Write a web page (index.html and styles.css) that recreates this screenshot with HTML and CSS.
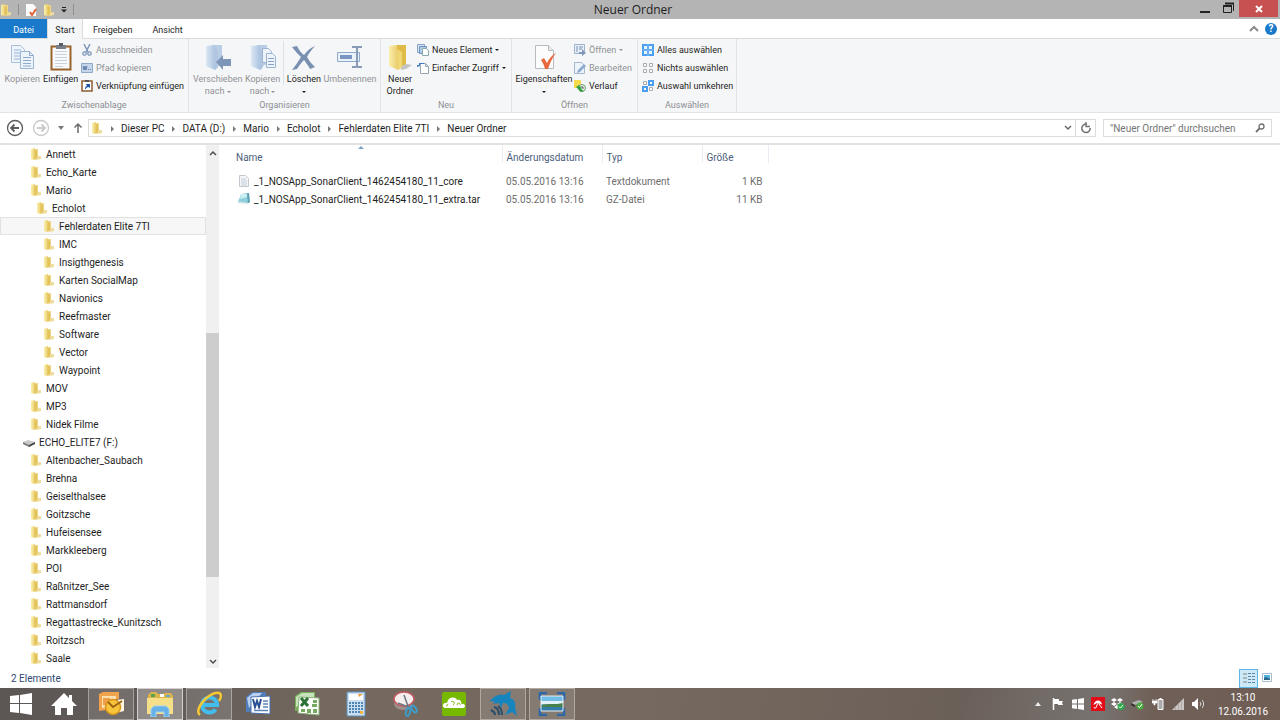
FILE: index.html
```
<!DOCTYPE html>
<html lang="de">
<head>
<meta charset="utf-8">
<meta name="viewport" content="width=device-width,initial-scale=1.0">
<title>Neuer Ordner</title>
<link rel="stylesheet" href="styles.css">
</head>
<body>
<!-- shared icons -->
<svg class="defs" width="0" height="0" aria-hidden="true">
	<defs>
		<linearGradient id="gold"><stop offset="0" stop-color="#fbefae"/><stop offset="1" stop-color="#e2bd4c"/></linearGradient>
		<linearGradient id="blue"><stop offset="0" stop-color="#dbe7f4"/><stop offset="1" stop-color="#9db9da"/></linearGradient>
	</defs>
	<symbol id="folder" viewBox="0 0 12 12">
		<path d="M5 1h3v7l3 1v2H4z" fill="#ecd685"/>
		<path d="M1 1l4-1v2l2 1v8l-3 1-3-1z" fill="url(#gold)"/>
		<path d="M5 2v9" stroke="#d8b650" stroke-width=".6"/>
		<path d="M7 9l4-1v3l-5 1z" fill="#eddc9c"/>
	</symbol>
	<symbol id="drive" viewBox="0 0 12 12">
		<path d="M0 6l5-2 7 2-6 3z" fill="#c9c9c9"/>
		<path d="M0 6l6 3v2L0 8z" fill="#777"/>
		<path d="M6 9l6-3v2l-6 3z" fill="#3f3f3f"/>
	</symbol>
	<symbol id="bigfolder" viewBox="0 0 28 28">
		<path d="M15 20l11 2-6 4-5 1z" fill="#c4c4c4"/>
		<path d="M10 2h10v19l-7 3z" fill="#dfbb48"/>
		<path d="M3 3l8-1v4l5 3v15l-4 3-9-4z" fill="url(#gold)"/>
		<path d="M12 7v20l4-3V9z" fill="#f0d675"/>
	</symbol>
	<symbol id="bluefolder" viewBox="0 0 28 28">
		<path d="M8 2h10v19l-6 3z" fill="#b9cde5"/>
		<path d="M2 3l9-1v4l3 3v15l-3 3-9-4z" fill="url(#blue)"/>
		<path d="M11 6v21l3-3V9z" fill="#afc5e0"/>
	</symbol>
	<symbol id="pages" viewBox="0 0 28 28">
		<path d="M3.500 2.500h9l4 4v13h-13z" fill="#edf3fa" stroke="#aabfd9"/>
		<path d="M6 7h7M6 10h8M6 13h8M6 16h8" stroke="#9bb5d6"/>
		<path d="M12.500 8.500h9l4 4v13h-13z" fill="#edf3fa" stroke="#9db5d3"/>
		<path d="M21.500 8.500v4h4M15 14.500h8M15 17.500h8M15 20.500h8M15 23h8" fill="none" stroke="#8da9cc"/>
	</symbol>
</svg>

<div class="window">
	<header class="titlebar">
		<div class="quick">
			<svg class="ico" viewBox="0 0 12 12"><use href="#folder"/></svg>
			<span class="quick-sep"></span>
			<button class="quick-btn" aria-label="Eigenschaften"><svg class="ico" viewBox="0 0 12 12"><path d="M1 0h7l3 3v9H1z" fill="#fbfbfb"/><path d="M5 8l2 3 4-6" fill="none" stroke="#e0643c" stroke-width="2"/></svg></button>
			<button class="quick-btn" aria-label="Neuer Ordner"><svg class="ico" viewBox="0 0 12 12"><use href="#folder"/></svg></button>
			<button class="quick-btn" aria-label="Schnellzugriff anpassen"><svg width="6" height="6" viewBox="0 0 6 6"><path d="M1 .5h4" stroke="#222"/><path d="M0 2.500h6L3 5.500z" fill="#222"/></svg></button>
			<span class="quick-sep"></span>
		</div>
		<h1 class="title">Neuer Ordner</h1>
		<div class="controls">
			<button class="ctl" aria-label="Minimieren"><svg width="12" height="12" viewBox="0 0 12 12"><path d="M1 10h10" stroke="#222" stroke-width="2"/></svg></button>
			<button class="ctl" aria-label="Wiederherstellen"><svg width="12" height="12" viewBox="0 0 12 12"><path d="M1.500 3.500h8v7h-8zM3 1.500h8.500V9" fill="none" stroke="#222"/><path d="M1 4h9M3 1.500h9" stroke="#222" stroke-width="2"/></svg></button>
			<button class="ctl close" aria-label="Schließen"><svg width="8" height="8" viewBox="0 0 8 8"><path d="M1 1l6 6M7 1L1 7" stroke="#fff" stroke-width="2"/></svg></button>
		</div>
	</header>

	<nav class="tabs">
		<button class="tab file">Datei</button>
		<button class="tab start active">Start</button>
		<button class="tab">Freigeben</button>
		<button class="tab">Ansicht</button>
		<div class="tabs-right">
			<button class="plain" aria-label="Menüband minimieren"><svg width="10" height="8" viewBox="0 0 10 8"><path d="M1 6l4-4 4 4" fill="none" stroke="#8a8a8a" stroke-width="2"/></svg></button>
			<button class="help" aria-label="Hilfe">?</button>
		</div>
	</nav>

	<section class="ribbon">
		<div class="group clip">
			<div class="group-body">
				<button class="big w38" disabled><svg class="big-ico" viewBox="0 0 28 28"><use href="#pages"/></svg><span>Kopieren</span></button>
				<button class="big w38"><svg class="big-ico" viewBox="0 0 28 28"><path d="M4.500 3.500h19v23h-19z" fill="#f8fafc" stroke="#99632b" stroke-width="2"/><path d="M8 8.500h12M8 11.500h12M8 14.500h12M8 17.500h12M8 20.500h12M8 23.500h8" stroke="#c8d2dd"/><path d="M9 2h10v4H9z" fill="#7a8089"/><path d="M12 0h4v3h-4z" fill="#555b63"/></svg><span>Einfügen</span></button>
				<div class="stack">
					<button class="item" disabled><svg class="ico" viewBox="0 0 12 12"><path d="M3 0l4 8M9 0L5 8" stroke="#7e98ba" stroke-width="1.500"/><circle cx="3.500" cy="9.500" r="1.700" fill="none" stroke="#7e98ba" stroke-width="1.300"/><circle cx="8.500" cy="9.500" r="1.700" fill="none" stroke="#7e98ba" stroke-width="1.300"/></svg>Ausschneiden</button>
					<button class="item" disabled><svg class="ico" viewBox="0 0 12 12"><path d="M.5 1.500h11v9H.5z" fill="#c6d6ea" stroke="#8fa9c9"/><path d="M2 4l1 4 1-4 1 4 1-4" fill="none" stroke="#5f7fa8"/><path d="M7 7.500h4" stroke="#5f7fa8" stroke-dasharray="1"/></svg>Pfad kopieren</button>
					<button class="item"><svg class="ico" viewBox="0 0 12 12"><path d="M1 1h10v10H1z" fill="#fff" stroke="#8a5d33" stroke-width="1.500"/><path d="M4 0h4v2H4z" fill="#555"/><path d="M4 9c0-2 1-3 2-3L5 4h4v4L7.500 7C6 7 5 8 5 9z" fill="#1c53a5"/></svg>Verknüpfung einfügen</button>
				</div>
			</div>
			<div class="group-name">Zwischenablage</div>
		</div>
		<div class="group organize">
			<div class="group-body">
				<button class="big w50" disabled><svg class="big-ico" viewBox="0 0 28 28"><use href="#bluefolder"/><path d="M12 19l7-7v4h8v7h-8v4z" fill="#7d95b7"/></svg><span>Verschieben<br>nach <i class="caret"></i></span></button>
				<button class="big w38" disabled><svg class="big-ico" viewBox="0 0 28 28"><use href="#bluefolder"/><path d="M13.500 5.500h6l3 3v11h-9z" fill="#eef3fa" stroke="#9cb3d1"/><path d="M17.500 10.500h6l3 3v11h-9z" fill="#eef3fa" stroke="#9cb3d1"/><path d="M19 15.500h6M19 18.500h6M19 21.500h6" stroke="#86a2c6"/></svg><span>Kopieren<br>nach <i class="caret"></i></span></button>
				<span class="group-sep"></span>
				<button class="big w38"><svg class="big-ico" viewBox="0 0 28 28"><path d="M2 4l5-1c2 4 4 7 7 9 3-4 6-7 11-9-3 3-6 7-8 11 2 4 5 7 8 10l-5 2c-2-4-4-6-6-9-3 3-5 6-7 9l-5 1c3-4 6-8 9-13C8 11 5 8 2 4z" fill="#7990b2"/></svg><span>Löschen<br><i class="caret"></i></span></button>
				<button class="big w54" disabled><svg class="big-ico" viewBox="0 0 28 28"><path d="M1.500 9.500h22v9h-22z" fill="#e9f1fa" stroke="#8fa9cc"/><path d="M4 12h12v4H4z" fill="#7896c1"/><path d="M16 4h4l1 1 1-1h4M21 5v18M16 24h4l1-1 1 1h4" fill="none" stroke="#879bb7" stroke-width="2"/></svg><span>Umbenennen</span></button>
			</div>
			<div class="group-name">Organisieren</div>
		</div>
		<div class="group new">
			<div class="group-body">
				<button class="big w34"><svg class="big-ico" viewBox="0 0 28 28"><use href="#bigfolder"/></svg><span>Neuer<br>Ordner</span></button>
				<div class="stack">
					<button class="item"><svg class="ico" viewBox="0 0 12 12"><path d="M.5 0.500h7v8h-7z" fill="#d8e5f3" stroke="#87a5c8"/><path d="M2.500 2.500h7v7h-7z" fill="#b2cce7" stroke="#6d91bb"/><path d="M5.500 4.500h4l2 2v5h-6z" fill="#fff" stroke="#8aa"/></svg>Neues Element <i class="caret"></i></button>
					<button class="item"><svg class="ico" viewBox="0 0 12 12"><path d="M3.500 1.500h5l3 3v7h-8z" fill="#fff" stroke="#99a5b3"/><path d="M8.500 1.500v3h3" fill="none" stroke="#99a5b3"/><path d="M0 5l3-1V2h4V1H2v2H0z" fill="#3d7ac7"/></svg>Einfacher Zugriff <i class="caret"></i></button>
				</div>
			</div>
			<div class="group-name">Neu</div>
		</div>
		<div class="group open">
			<div class="group-body">
				<button class="big w58"><svg class="big-ico" viewBox="0 0 28 28"><path d="M5.500 2.500h13l5 5v18h-18z" fill="#fcfcfc" stroke="#b7bcc2"/><path d="M18.500 2.500v5h5" fill="#e8e8e8" stroke="#b7bcc2"/><path d="M11 17l3-2 3 5c2-4 5-8 9-10-4 5-6 10-8 16h-3c-1-4-2-6-4-9z" fill="#e8693c"/></svg><span>Eigenschaften<br><i class="caret"></i></span></button>
				<div class="stack">
					<button class="item" disabled><svg class="ico" viewBox="0 0 12 12"><path d="M.5 .5h10v9H.5z" fill="#eaf0f8" stroke="#9fb3ce"/><path d="M2 3h2M2 5h2M2 7h2M5 3h4M5 5h3" stroke="#7391b9"/><path d="M5 8h3V5l4 4-4 3v-2H5z" fill="#8398b9"/></svg>Öffnen <i class="caret"></i></button>
					<button class="item" disabled><svg class="ico" viewBox="0 0 12 12"><path d="M.5 .5h7l3 3v8H.5z" fill="#edf3fa" stroke="#a6b8d0"/><path d="M3 11l1-3 6-6 2 2-6 6z" fill="#8eaad0"/></svg>Bearbeiten</button>
					<button class="item"><svg class="ico" viewBox="0 0 12 12"><path d="M0 0h7v8H0z" fill="#f5dc4e"/><circle cx="8" cy="8" r="3.500" fill="#e8f2e8" stroke="#719b71"/><path d="M8 6v2h2" fill="none" stroke="#555"/><path d="M2 7l3-2v1c2 0 2 2 3 4l2 1-3 1C5 11 5 9 5 9v1z" fill="#32a340"/></svg>Verlauf</button>
				</div>
			</div>
			<div class="group-name">Öffnen</div>
		</div>
		<div class="group select">
			<div class="group-body">
				<div class="stack">
					<button class="item"><svg class="ico" viewBox="0 0 12 12"><path d="M0 0h12v12H0z" fill="#4b9ff0"/><path d="M2 2h3v3H2zM7 2h3v3H7zM2 7h3v3H2zM7 7h3v3H7z" fill="#e9f4ff"/><path d="M6 0v12M0 6h12" stroke="#a6d0fa" stroke-width=".6"/></svg>Alles auswählen</button>
					<button class="item"><svg class="ico" viewBox="0 0 12 12"><path d="M1.500 1.500h3v3h-3zM7.500 1.500h3v3h-3zM1.500 7.500h3v3h-3zM7.500 7.500h3v3h-3z" fill="#fff" stroke="#aaa"/></svg>Nichts auswählen</button>
					<button class="item"><svg class="ico" viewBox="0 0 12 12"><path d="M6 0h6v6H6zM0 6h6v6H0z" fill="#4b9ff0"/><path d="M8 2h2v2H8zM2 8h2v2H2z" fill="#fff"/><path d="M1.500 1.500h3v3h-3zM7.500 7.500h3v3h-3z" fill="#fff" stroke="#aaa"/></svg>Auswahl umkehren</button>
				</div>
			</div>
			<div class="group-name">Auswählen</div>
		</div>
	</section>

	<div class="addressbar">
		<div class="history">
			<button class="plain" aria-label="Zurück"><svg width="18" height="18" viewBox="0 0 18 18"><circle cx="9" cy="9" r="7.500" fill="none" stroke="#5c5c5c" stroke-width="1.300"/><path d="M13 9H5M8.500 5.500L5 9l3.500 3.500" fill="none" stroke="#5c5c5c" stroke-width="1.800"/></svg></button>
			<button class="plain" aria-label="Vorwärts"><svg width="18" height="18" viewBox="0 0 18 18"><circle cx="9" cy="9" r="7.500" fill="none" stroke="#c9c9c9" stroke-width="1.300"/><path d="M5 9h8M9.500 5.500L13 9l-3.500 3.500" fill="none" stroke="#c9c9c9" stroke-width="1.800"/></svg></button>
			<button class="plain" aria-label="Letzte Orte"><svg width="6" height="4" viewBox="0 0 6 4"><path d="M0 0h6L3 4z" fill="#777"/></svg></button>
			<button class="plain" aria-label="Nach oben"><svg width="12" height="12" viewBox="0 0 12 12"><path d="M6 11V2M2.500 5.500L6 2l3.500 3.500" fill="none" stroke="#6b6b6b" stroke-width="1.500"/></svg></button>
		</div>
		<div class="path">
			<svg class="ico" viewBox="0 0 12 12"><use href="#folder"/></svg>
			<a class="crumb" href="#">Dieser PC</a>
			<a class="crumb" href="#">DATA (D:)</a>
			<a class="crumb" href="#">Mario</a>
			<a class="crumb" href="#">Echolot</a>
			<a class="crumb" href="#">Fehlerdaten Elite 7TI</a>
			<a class="crumb" href="#">Neuer Ordner</a>
			<button class="plain drop" aria-label="Vorherige Orte"><svg width="8" height="6" viewBox="0 0 8 6"><path d="M1 1l3 3 3-3" fill="none" stroke="#666" stroke-width="1.500"/></svg></button>
			<button class="plain refresh" aria-label="Aktualisieren"><svg width="12" height="12" viewBox="0 0 12 12"><path d="M7 2.200A4.200 4.200 0 1 0 10.200 6" fill="none" stroke="#707070" stroke-width="1.500"/><path d="M6 0v4.500h4" fill="none" stroke="#707070" stroke-width="1.300"/></svg></button>
		</div>
		<div class="search">
			<input class="search-input" type="search" aria-label="Suchen" placeholder="&quot;Neuer Ordner&quot; durchsuchen">
			<svg width="10" height="10" viewBox="0 0 10 10"><circle cx="6.500" cy="3.500" r="2.500" fill="none" stroke="#707070" stroke-width="1.300"/><path d="M4.500 5.500L1 9" stroke="#707070" stroke-width="1.800"/></svg>
		</div>
	</div>

	<main class="main">
		<nav class="tree">
			<a class="node l1" href="#"><svg class="ico"><use href="#folder"/></svg>Annett</a>
			<a class="node l1" href="#"><svg class="ico"><use href="#folder"/></svg>Echo_Karte</a>
			<a class="node l1" href="#"><svg class="ico"><use href="#folder"/></svg>Mario</a>
			<a class="node l2" href="#"><svg class="ico"><use href="#folder"/></svg>Echolot</a>
			<a class="node l3 current" href="#"><svg class="ico"><use href="#folder"/></svg>Fehlerdaten Elite 7TI</a>
			<a class="node l3" href="#"><svg class="ico"><use href="#folder"/></svg>IMC</a>
			<a class="node l3" href="#"><svg class="ico"><use href="#folder"/></svg>Insigthgenesis</a>
			<a class="node l3" href="#"><svg class="ico"><use href="#folder"/></svg>Karten SocialMap</a>
			<a class="node l3" href="#"><svg class="ico"><use href="#folder"/></svg>Navionics</a>
			<a class="node l3" href="#"><svg class="ico"><use href="#folder"/></svg>Reefmaster</a>
			<a class="node l3" href="#"><svg class="ico"><use href="#folder"/></svg>Software</a>
			<a class="node l3" href="#"><svg class="ico"><use href="#folder"/></svg>Vector</a>
			<a class="node l3" href="#"><svg class="ico"><use href="#folder"/></svg>Waypoint</a>
			<a class="node l1" href="#"><svg class="ico"><use href="#folder"/></svg>MOV</a>
			<a class="node l1" href="#"><svg class="ico"><use href="#folder"/></svg>MP3</a>
			<a class="node l1" href="#"><svg class="ico"><use href="#folder"/></svg>Nidek Filme</a>
			<a class="node l0" href="#"><svg class="ico"><use href="#drive"/></svg>ECHO_ELITE7 (F:)</a>
			<a class="node l1" href="#"><svg class="ico"><use href="#folder"/></svg>Altenbacher_Saubach</a>
			<a class="node l1" href="#"><svg class="ico"><use href="#folder"/></svg>Brehna</a>
			<a class="node l1" href="#"><svg class="ico"><use href="#folder"/></svg>Geiselthalsee</a>
			<a class="node l1" href="#"><svg class="ico"><use href="#folder"/></svg>Goitzsche</a>
			<a class="node l1" href="#"><svg class="ico"><use href="#folder"/></svg>Hufeisensee</a>
			<a class="node l1" href="#"><svg class="ico"><use href="#folder"/></svg>Markkleeberg</a>
			<a class="node l1" href="#"><svg class="ico"><use href="#folder"/></svg>POI</a>
			<a class="node l1" href="#"><svg class="ico"><use href="#folder"/></svg>Raßnitzer_See</a>
			<a class="node l1" href="#"><svg class="ico"><use href="#folder"/></svg>Rattmansdorf</a>
			<a class="node l1" href="#"><svg class="ico"><use href="#folder"/></svg>Regattastrecke_Kunitzsch</a>
			<a class="node l1" href="#"><svg class="ico"><use href="#folder"/></svg>Roitzsch</a>
			<a class="node l1" href="#"><svg class="ico"><use href="#folder"/></svg>Saale</a>
		</nav>
		<div class="scrollbar">
			<button class="scroll-btn" aria-label="Nach oben scrollen"><svg width="8" height="6" viewBox="0 0 8 6"><path d="M1 5l3-3 3 3" fill="none" stroke="#505050" stroke-width="1.500"/></svg></button>
			<div class="scroll-before"></div>
			<div class="scroll-thumb"></div>
			<div class="scroll-after"></div>
			<button class="scroll-btn" aria-label="Nach unten scrollen"><svg width="8" height="6" viewBox="0 0 8 6"><path d="M1 1l3 3 3-3" fill="none" stroke="#505050" stroke-width="1.500"/></svg></button>
		</div>
		<div class="files">
			<table class="list">
				<thead>
					<tr>
						<th class="c-name">Name<svg class="sort" width="6" height="4" viewBox="0 0 6 4"><path d="M0 4l3-3 3 3z" fill="#7ba3c8"/></svg></th>
						<th class="c-date">Änderungsdatum</th>
						<th class="c-type">Typ</th>
						<th class="c-size">Größe</th>
					</tr>
				</thead>
				<tbody>
					<tr>
						<td class="c-name"><span class="fname"><svg class="ico" viewBox="0 0 12 12"><path d="M1.500 .5h6l3 3v8h-9z" fill="#f4f6f8" stroke="#c3c8ce"/><path d="M3 4h5M3 6h6M3 8h6M3 10h6" stroke="#aebccb" stroke-width=".7"/></svg>_1_NOSApp_SonarClient_1462454180_11_core</span></td>
						<td>05.05.2016 13:16</td>
						<td>Textdokument</td>
						<td class="num">1 KB</td>
					</tr>
					<tr>
						<td class="c-name"><span class="fname"><svg class="ico" viewBox="0 0 12 12"><path d="M4 1l7-1 1 9-3 2z" fill="#5c9fb0"/><path d="M3 1h6l1 9-9 1-1-2z" fill="#8fd0dc"/><path d="M3 1h6v3L2 6z" fill="#cbeef2"/><path d="M0 9l10 1-1 2-8-1z" fill="#eef4f4"/></svg>_1_NOSApp_SonarClient_1462454180_11_extra.tar</span></td>
						<td>05.05.2016 13:16</td>
						<td>GZ-Datei</td>
						<td class="num">11 KB</td>
					</tr>
				</tbody>
			</table>
		</div>
	</main>

	<footer class="status">
		<span>2 Elemente</span>
		<div class="views">
			<button class="view on" aria-label="Details"><svg width="14" height="12" viewBox="0 0 14 12"><path d="M1 1h4v2H1zM1 5h4v2H1zM1 9h4v2H1z" fill="#a6b4bc"/><path d="M6 1.500h3M10 1.500h3M6 4.500h3M10 4.500h3M6 7.500h3M10 7.500h3M6 10.500h3M10 10.500h3" stroke="#5e87a3"/></svg></button>
			<button class="view" aria-label="Große Symbole"><svg width="10" height="10" viewBox="0 0 10 10"><path d="M.5 .5h9v8h-9z" fill="#fff" stroke="#a7bccb"/><path d="M2 2h6v5H2z" fill="#53b0de"/><path d="M2 5l2-1 4 2v1H2z" fill="#2c6688"/></svg></button>
		</div>
	</footer>
</div>

<footer class="taskbar">
	<button class="task win" aria-label="Start"><svg width="22" height="22" viewBox="0 0 22 22"><path d="M0 3l9-1v8H0zM10 2l12-2v10H10zM0 11h9v9l-9-1zM10 11h12v11l-12-2z" fill="#fff"/></svg></button>
	<button class="task home" aria-label="Startseite"><svg width="26" height="22" viewBox="0 0 26 22"><path d="M13 0l5 5V2h3v6l5 5h-4v9h-6v-7h-6v7H4v-9H0z" fill="#fff"/></svg></button>
	<div class="apps">
		<button class="task run" aria-label="Outlook"><svg width="26" height="26" viewBox="0 0 26 26"><path d="M1 3l4-2h16v7H8v11l-7 1z" fill="#f1a34b"/><path d="M4 5h14v12H4z" fill="#fbe0b0"/><path d="M5 7h7v7H5z" fill="#f0a04a"/><path d="M10 10l16-2v12l-12 3z" fill="#fff5dc"/><circle cx="15" cy="16" r="7.500" fill="#f8c43c" stroke="#d8941c" stroke-width="1.500"/><path d="M10 11l5 5 9-6" fill="none" stroke="#9b6213" stroke-width="1.800"/></svg></button>
		<button class="task run front" aria-label="Explorer"><svg width="28" height="26" viewBox="0 0 28 26"><path d="M2 4l3-3h5l2 2h5l2-1h6l2 3v18H2z" fill="#dcb54c"/><path d="M5 3h4v3H5z" fill="#55a54e"/><path d="M14 3h4v3h-4z" fill="#fff"/><path d="M20 4h4v2h-4z" fill="#6ba3d1"/><path d="M1 7h26v16H1z" fill="#f5df89"/><path d="M5 26V18l3-3h12l3 3v8h-5v-5h-8v5z" fill="#69b2e6" stroke="#9dd1f3"/></svg></button>
		<button class="task run" aria-label="Internet Explorer"><svg width="26" height="26" viewBox="0 0 26 26"><path d="M19.500 18.500a7.500 7.500 0 1 1 1.500-4.500H8" fill="none" stroke="#43bdeb" stroke-width="4"/><path d="M4 24C-3 19 13 0 23 2c3 1 2 5 0 8" fill="none" stroke="#f5c832" stroke-width="2.500"/></svg></button>
		<button class="task" aria-label="Word"><svg width="26" height="26" viewBox="0 0 26 26"><path d="M1 6l6-5h14v19L1 21z" fill="#517dbb"/><path d="M2 7l6-5h9L4 17z" fill="#b8d0ee"/><path d="M6 6l19-1v18L6 22z" fill="#fff" stroke="#4870ad"/><path d="M8 8l2 8 2-6 2 6 2-8" fill="none" stroke="#294f95" stroke-width="2"/><path d="M18 10h5M18 13h5M18 16h5M9 19.500h14" stroke="#5f83b8" stroke-width="1.500"/></svg></button>
		<button class="task" aria-label="Excel"><svg width="26" height="26" viewBox="0 0 26 26"><path d="M1 5l6-4h14v17L1 20z" fill="#78b15c"/><path d="M2 6l6-4h12v6L2 16z" fill="#c8e3bc"/><path d="M5 6l20 1v17L4 22z" fill="#fff" stroke="#88b276"/><path d="M7 18h4v3H7zM13 18h4v4h-4zM19 18h4v4h-4zM19 9h4v3h-4zM18 13h5v3h-5z" fill="#76aa60"/><path d="M7 7l7 8M14 7l-7 8" stroke="#2c7135" stroke-width="3"/></svg></button>
		<button class="task" aria-label="Rechner"><svg width="20" height="26" viewBox="0 0 20 26"><path d="M1 1h18v24H1z" fill="#cae0f0" stroke="#5c8eb9"/><path d="M3 3h14v6H3z" fill="#fff"/><path d="M12 3h5l-4 3z" fill="#eba13d"/><path d="M3 12h14M3 15h14M3 18h14M3 21h14" stroke="#5085b4" stroke-width="2" stroke-dasharray="2 1"/><path d="M14 20h3v3h-3z" fill="#f5b340"/></svg></button>
		<button class="task" aria-label="Snipping Tool"><svg width="26" height="26" viewBox="0 0 26 26"><ellipse cx="11" cy="13" rx="9" ry="6" fill="#9d8d8b"/><ellipse cx="12" cy="8" rx="10" ry="7" fill="#f7eeee" stroke="#c55a62" stroke-width="1.500"/><path d="M12 4l5 14M6 12l13 5" stroke="#6c7884" stroke-width="1.500"/><ellipse cx="16" cy="21" rx="2" ry="4" fill="none" stroke="#3e9cc9" stroke-width="2" transform="rotate(15 16 21)"/><ellipse cx="22" cy="18" rx="2" ry="4" fill="none" stroke="#3e9cc9" stroke-width="2" transform="rotate(-35 22 18)"/></svg></button>
		<button class="task" aria-label="Cloud"><svg width="26" height="26" viewBox="0 0 26 26"><rect x="1" y="1" width="24" height="24" rx="2" fill="#76b900"/><path d="M4 17c-4-1-2-6 2-5 1-6 8-7 10-3 4-1 5 3 4 4 5-1 5 4 2 4z" fill="#fff"/><path d="M5 15c2 0 2-2 1-2M10 11c2-2 5 1 2 3M16 14c0-3 4-2 3 0" fill="none" stroke="#76b900"/></svg></button>
		<button class="task run" aria-label="Reefmaster"><svg width="28" height="26" viewBox="0 0 28 26"><path d="M1 10C4 6 9 3 15 4l7-4-1 7c4 1 6 4 5 9l2 9-5-4-7 3 4-7c0-3-3-5-6-5l-2 5-2-5-6 1 2-2z" fill="#1685bd"/><path d="M2 19c2 1 4 2 4 5M5 16c4 1 5 4 5 8M9 15c3 2 4 5 4 9" fill="none" stroke="#284d6c" stroke-width="2"/></svg></button>
		<button class="task run" aria-label="Bildanzeige"><svg width="28" height="24" viewBox="0 0 28 24"><path d="M2 8V1h7M19 1h7v7M26 16v7h-7M9 23H2v-7" fill="none" stroke="#2a68aa" stroke-width="2.500"/><path d="M3 4h22v15H3z" fill="#72bce8"/><path d="M3 9h22v3H3z" fill="#e2f1f7"/><path d="M3 13c7-2 15 0 22-2v4H3z" fill="#47804b"/><path d="M3 15h22v4H3z" fill="#327da7"/><path d="M3 4h22v15H3z" fill="none" stroke="#e5edf3"/></svg></button>
	</div>
	<div class="tray">
		<button class="tray-btn" aria-label="Ausgeblendete Symbole"><svg width="6" height="4" viewBox="0 0 6 4"><path d="M0 4l3-4 3 4z" fill="#eee"/></svg></button>
		<button class="tray-btn" aria-label="Wartungscenter"><svg width="12" height="12" viewBox="0 0 12 12"><path d="M1.500 0v12" stroke="#fff" stroke-width="1.500"/><path d="M2 1h5v2h4l-1 2 1 2H6V6H2z" fill="#fff"/></svg></button>
		<button class="tray-btn" aria-label="Windows"><svg width="12" height="12" viewBox="0 0 22 22"><path d="M0 3l9-1v8H0zM11 2l11-2v10H11zM0 12h9v8l-9-1zM11 12h11v10l-11-2z" fill="#fff"/></svg></button>
		<button class="tray-btn" aria-label="Avira"><svg width="14" height="14" viewBox="0 0 14 14"><path d="M0 0h14v14H0z" fill="#e30d18"/><path d="M2.500 8C3 3 10 1 11 7.500L6 6z" fill="#fff"/><path d="M7 6l-2 4.500c0 1-2 1-2-.5M8 7l3 4" fill="none" stroke="#fff"/></svg></button>
		<button class="tray-btn" aria-label="Dropbox"><svg width="14" height="12" viewBox="0 0 14 12"><path d="M3 0l3 2-3 2-3-2zM9 0l3 2-3 2-3-2zM3 4l3 2-3 2-3-2zM9 4l3 2-3 2-3-2zM6 7l3 2-3 2-3-2z" fill="#fff"/><circle cx="10" cy="8.500" r="3.500" fill="#2da84a"/><path d="M8 8.500l1.500 1.500L12 7" fill="none" stroke="#fff"/></svg></button>
		<button class="tray-btn" aria-label="Hardware sicher entfernen"><svg width="14" height="12" viewBox="0 0 14 12"><path d="M0 5l8-3 4 2-8 3z" fill="#b1b1b1"/><path d="M0 5l4 2v2L0 7z" fill="#333"/><circle cx="9" cy="8" r="3.500" fill="#4bac3f"/><path d="M7 8l1.500 1.500L11 6" fill="none" stroke="#fff"/></svg></button>
		<button class="tray-btn" aria-label="Akku"><svg width="12" height="12" viewBox="0 0 12 12"><path d="M6 1.500h5v10H6z" fill="#aaa" stroke="#fff"/><path d="M7.500 0h2v1h-2z" fill="#fff"/><path d="M1 1v2M4 1v2M0 3h5v2H3v2H2V5H0z" fill="#fff" stroke="#fff" stroke-width=".7"/></svg></button>
		<button class="tray-btn" aria-label="Netzwerk"><svg width="12" height="12" viewBox="0 0 12 12"><path d="M0 12L12 0v12z" fill="#cbc6c3"/><path d="M3.500 8v4M6.500 5v7M9.500 2v10" stroke="#aaa39e" stroke-width=".8"/></svg></button>
		<button class="tray-btn" aria-label="Lautstärke"><svg width="13" height="12" viewBox="0 0 13 12"><path d="M0 4h2l4-4v12L2 8H0z" fill="#fff"/><path d="M8 4c1 1 1 3 0 4M10 2c2 2 2 6 0 8" fill="none" stroke="#ddd"/></svg></button>
		<div class="clock"><time>13:10</time><time>12.06.2016</time></div>
	</div>
</footer>
</body>
</html>
```
FILE: styles.css
```
*,*:before,*:after{
	padding: 0;
	margin: 0;
	box-sizing: border-box;
}
body{
	display: flex;
	flex-direction: column;
	height: 100vh;
	overflow: hidden;
	font-family: Roboto, "Open Sans", sans-serif;
	font-size: 10px;
	color: #1e1e1e;
	background-color: #fff;
}
button,input{
	font: inherit;
	color: inherit;
	border: 0;
	background: none;
}
a{
	color: inherit;
	text-decoration: none;
}
svg{
	flex: none;
}
.defs{
	position: absolute;
}
.ico{
	width: 12px;
	height: 12px;
}
.plain{
	display: flex;
	align-items: center;
	justify-content: center;
}
.caret{
	display: inline-block;
	border: 2px solid transparent;
	border-top-color: currentColor;
	border-bottom: 0;
	vertical-align: middle;
}
.window{
	flex: 1;
	display: flex;
	flex-direction: column;
	min-height: 0;
}

/* title bar */
.titlebar{
	display: flex;
	height: 19px;
	background-color: #b4b4b4;
}
.quick{
	display: flex;
	align-items: center;
	gap: 6px;
	width: 76px;
}
.quick-sep{
	width: 1px;
	height: 11px;
	background-color: #8f8f8f;
}
.quick-btn{
	display: flex;
	align-items: center;
}
.title{
	flex: 1;
	text-align: center;
	font-family: "Open Sans", sans-serif;
	font-size: 12px;
	font-weight: normal;
	line-height: 20px;
}
.controls{
	display: flex;
	width: 90px;
	padding-left: 4px;
}
.ctl{
	display: flex;
	align-items: center;
	justify-content: center;
	width: 23px;
	height: 16px;
}
.ctl.close{
	width: 39px;
	height: 17px;
	margin-left: auto;
	margin-right: 2px;
	background-color: #c75050;
}

/* tabs */
.tabs{
	display: flex;
	height: 20px;
	border-bottom: 1px solid #dadbdc;
}
.tab{
	height: 20px;
	padding: 2px 10px 0;
	font-size: 9px;
}
.tab.file{
	width: 47px;
	height: 19px;
	color: #fff;
	background-color: #1979ca;
}
.tab.start{
	width: 36px;
	padding: 2px 0 0;
	border: 1px solid #dadbdc;
	border-width: 0 1px;
	background-color: #f5f6f7;
}
.tabs-right{
	display: flex;
	align-items: center;
	gap: 6px;
	margin-left: auto;
	padding-right: 3px;
}
.help{
	width: 12px;
	height: 12px;
	border-radius: 50%;
	font-weight: bold;
	line-height: 12px;
	color: #fff;
	background-color: #1979ca;
}

/* ribbon */
.ribbon{
	display: flex;
	height: 74px;
	font-size: 9px;
	border-bottom: 1px solid #e2e3e4;
	background-color: #f5f6f7;
}
.group{
	display: flex;
	flex-direction: column;
	padding: 2px 4px 0;
	border-right: 1px solid #e2e3e4;
}
.clip{
	width: 189px;
}
.organize{
	width: 192px;
}
.new{
	width: 131px;
}
.open{
	width: 126px;
}
.select{
	width: 99px;
}
.group-body{
	display: flex;
	flex: 1;
	gap: 2px;
}
.group-name{
	line-height: 14px;
	text-align: center;
	color: #8c8f94;
}
.group-sep{
	width: 1px;
	height: 44px;
	background-color: #e0e1e3;
}
.big{
	display: flex;
	flex-direction: column;
	align-items: center;
	gap: 2px;
	height: 56px;
	padding-top: 2px;
	line-height: 12px;
	white-space: nowrap;
}
.big-ico{
	width: 28px;
	height: 28px;
}
.w34{
	width: 30px;
}
.w38{
	width: 37px;
}
.w50{
	width: 50px;
}
.w54{
	width: 52px;
}
.w58{
	width: 56px;
}
.big:disabled,.item:disabled{
	color: #8f9296;
}
.stack{
	display: flex;
	flex-direction: column;
}
.item{
	display: flex;
	align-items: center;
	gap: 3px;
	height: 18px;
	white-space: nowrap;
}

/* address bar */
.addressbar{
	display: flex;
	align-items: center;
	gap: 7px;
	height: 32px;
	padding: 0 8px 0 6px;
	border-bottom: 2px solid #e2e2e2;
}
.history{
	display: flex;
	align-items: center;
	gap: 8px;
	width: 75px;
}
.path{
	display: flex;
	flex: 1;
	align-items: center;
	height: 18px;
	padding-left: 2px;
	border: 1px solid #dcdcdc;
}
.crumb:before{
	content: "";
	display: inline-block;
	margin: 0 7px 0 8px;
	border: 3px solid transparent;
	border-left-color: #777;
	border-right: 0;
}
.drop{
	width: 14px;
	margin-left: auto;
}
.refresh{
	width: 20px;
	height: 16px;
	border-left: 1px solid #dcdcdc;
}
.search{
	display: flex;
	align-items: center;
	width: 169px;
	height: 18px;
	padding: 0 6px;
	border: 1px solid #dcdcdc;
}
.search-input{
	flex: 1;
	min-width: 0;
	outline: 0;
	appearance: none;
}
.search-input::placeholder{
	color: #757575;
}

/* folder tree */
.main{
	flex: 1;
	display: flex;
	min-height: 0;
}
.tree{
	width: 206px;
	overflow: hidden;
}
.node{
	display: flex;
	align-items: center;
	gap: 4px;
	height: 18px;
	border: 1px solid transparent;
}
.l0{
	padding-left: 22px;
}
.l1{
	padding-left: 29px;
}
.l2{
	padding-left: 35px;
}
.l3{
	padding-left: 42px;
}
.current{
	border-color: #e2e2e2;
	background-color: #f7f7f7;
}
.scrollbar{
	display: flex;
	flex-direction: column;
	width: 13px;
	background-color: #f0f0f0;
}
.scroll-btn{
	height: 14px;
}
.scroll-before{
	flex: 174;
}
.scroll-thumb{
	flex: 243;
	background-color: #cdcdcd;
}
.scroll-after{
	flex: 77;
}

/* file list */
.files{
	flex: 1;
	padding-left: 12px;
}
.list{
	width: 538px;
	table-layout: fixed;
	border-collapse: collapse;
}
.list th{
	position: relative;
	height: 18px;
	padding: 6px 4px 0;
	text-align: left;
	font-weight: normal;
	color: #4c607a;
	border-right: 1px solid #e9eef4;
}
.list .c-name{
	padding-left: 5px;
}
th.c-name{
	width: 271px;
}
th.c-date,th.c-type{
	width: 100px;
}
.sort{
	position: absolute;
	top: 0;
	left: 47%;
}
.list tbody:before{
	content: "";
	display: block;
	height: 9px;
}
.list td{
	height: 18px;
	padding: 0 4px;
	color: #6d6d6d;
}
.list .num{
	padding-right: 6px;
	text-align: right;
}
.fname{
	display: flex;
	align-items: center;
	gap: 4px;
	padding-left: 2px;
	color: #1e1e1e;
}

/* status bar */
.status{
	display: flex;
	align-items: center;
	justify-content: space-between;
	height: 20px;
	padding: 0 4px 0 11px;
	color: #2f4a70;
}
.views{
	display: flex;
}
.view{
	display: flex;
	align-items: center;
	justify-content: center;
	width: 18px;
	height: 19px;
}
.view.on{
	width: 19px;
	border: 1px solid #5fb7e5;
	background-color: #cde9f7;
}

/* taskbar */
.taskbar{
	display: flex;
	height: 32px;
	color: #fff;
	background: linear-gradient(100deg, #5c5655 0, #625b58 14%, #75695f 26%, #76695f 50%, #6b6059 75%, #777370 86%, #6f5f56 90%, #705e55 100%);
}
.task{
	display: flex;
	align-items: center;
	justify-content: center;
	width: 46px;
	height: 32px;
	border: 1px solid transparent;
}
.task.win{
	width: 41px;
}
.apps{
	display: flex;
	gap: 3px;
	padding-left: 1px;
}
.task.run{
	border-color: rgba(255,255,255,.35);
	background-color: rgba(255,255,255,.12);
}
.task.front{
	border-color: rgba(255,255,255,.6);
	background-color: rgba(255,255,255,.3);
}
.tray{
	display: flex;
	margin-left: auto;
	padding-right: 2px;
}
.tray-btn{
	display: flex;
	align-items: center;
	justify-content: center;
	width: 20px;
}
.clock{
	display: flex;
	flex-direction: column;
	align-items: center;
	width: 70px;
	padding-top: 3px;
	line-height: 14px;
}
```
